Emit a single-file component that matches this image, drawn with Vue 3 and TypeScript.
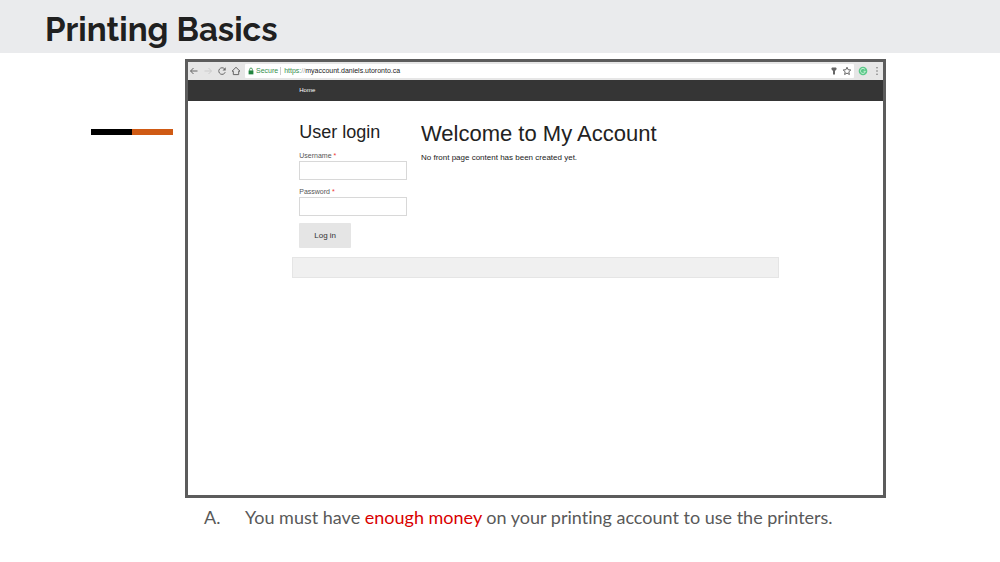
<script setup lang="ts">
import { ref } from 'vue'

const username = ref('')
const password = ref('')
const address = ref('https://myaccount.daniels.utoronto.ca')
</script>

<template>
  <div class="slide">
    <header class="title-bar">
      <h1>Printing Basics</h1>
    </header>
    <main class="body">
      <div class="accent"><span class="dark"></span><span class="orange"></span></div>
      <section class="content">
        <div class="browser">
          <div class="toolbar">
            <div class="nav-buttons">
              <button type="button" aria-label="Back">
                <svg viewBox="0 0 10 10"><path d="M8.5 5H1.7M4.5 2L1.5 5l3 3" /></svg>
              </button>
              <button type="button" aria-label="Forward" class="faded">
                <svg viewBox="0 0 10 10"><path d="M1.5 5h6.8M5.5 2l3 3-3 3" /></svg>
              </button>
              <button type="button" aria-label="Reload">
                <svg viewBox="0 0 10 10"><path d="M8.2 6.2A3.3 3.3 0 1 1 7.5 2.8" /><path class="solid" d="M8.7 1.2v3.2H5.5z" /></svg>
              </button>
              <button type="button" aria-label="Home page">
                <svg viewBox="0 0 10 10"><path d="M1 5.2L5 1.3l4 3.9H7.7v3.4H2.3V5.2z" /></svg>
              </button>
            </div>
            <div class="address">
              <svg class="lock" viewBox="0 0 10 10"><path d="M3.3 4.5V3a1.7 1.7 0 0 1 3.4 0v1.5" /><path class="solid" d="M2 4.3h6v4.9H2z" /></svg>
              <span class="secure">Secure</span>
              <span class="divider"></span>
              <a class="url" :href="address"><span class="scheme">https:</span><span class="slashes">//</span>myaccount.daniels.utoronto.ca</a>
              <button type="button" aria-label="Saved passwords" class="key">
                <svg viewBox="0 0 10 10"><path class="solid" d="M3 1.5h4l.8 1.6L6 5v3l-1 .9L4 8V5L2.2 3.1z" /></svg>
              </button>
              <button type="button" aria-label="Bookmark">
                <svg viewBox="0 0 10 10"><path d="M5 1.2l1.1 2.5 2.7.3-2 1.8.6 2.7L5 7.1 2.6 8.5l.6-2.7-2-1.8 2.7-.3z" /></svg>
              </button>
            </div>
            <button type="button" aria-label="Extension" class="extension">
              <svg viewBox="0 0 10 10"><circle cx="5" cy="5" r="4.3" /><path d="M7 3.5A2.5 2.5 0 1 0 7.4 5.3H5.6" /></svg>
            </button>
            <button type="button" aria-label="Menu" class="menu">
              <svg viewBox="0 0 10 10"><circle cx="5" cy="1.8" r=".8" /><circle cx="5" cy="5" r=".8" /><circle cx="5" cy="8.2" r=".8" /></svg>
            </button>
          </div>
          <nav class="site-nav"><div class="site"><a href="#home">Home</a></div></nav>
          <div class="site page">
            <form class="login" @submit.prevent>
              <h2>User login</h2>
              <label for="username">Username <em>*</em></label>
              <input id="username" v-model="username" type="text" />
              <label for="password">Password <em>*</em></label>
              <input id="password" v-model="password" type="password" />
              <button type="submit">Log in</button>
            </form>
            <article>
              <h2>Welcome to My Account</h2>
              <p>No front page content has been created yet.</p>
            </article>
          </div>
          <footer class="site site-footer"></footer>
        </div>
        <ol class="notes">
          <li><span class="marker">A.</span><span>You must have <strong>enough money</strong> on your printing account to use the printers.</span></li>
        </ol>
      </section>
    </main>
  </div>
</template>

<style>
body {
  margin: 0;
  background: #fff;
}
</style>

<style scoped>
* {
  box-sizing: border-box;
}
.slide {
  min-height: 100vh;
  font-family: Lato, sans-serif;
}
h1, h2, p, ol {
  margin: 0;
  padding: 0;
  list-style: none;
}
button {
  padding: 0;
  border: 0;
  background: none;
  color: inherit;
  font: inherit;
}
.title-bar {
  height: 53px;
  padding: 8px 45px 0;
  background: #eaebed;
}
h1 {
  color: #202020;
  font: 700 33px/44px Raleway, Lato, sans-serif;
}
.body {
  display: grid;
  grid-template-columns: 185px 1fr 114px;
  padding-top: 6px;
}
.accent {
  display: flex;
  height: 6px;
  margin: 70px 12px 0 91px;
}
.accent span {
  flex: 1;
}
.dark {
  background: #000;
}
.orange {
  background: #cf5a14;
}
.browser {
  height: calc(100vh - 123px);
  min-height: 300px;
  border: 3px solid #5c5c5c;
  background: #fff;
  font-family: "Liberation Sans", Arial, sans-serif;
}
.toolbar {
  display: flex;
  align-items: center;
  height: 18px;
  background: #e6e6e6;
  color: #666;
}
.toolbar button {
  display: flex;
  flex: none;
}
.toolbar svg {
  width: 10px;
  height: 10px;
  fill: none;
  stroke: currentColor;
  stroke-width: 1;
}
.toolbar .solid {
  fill: currentColor;
  stroke: none;
}
.nav-buttons {
  display: flex;
  gap: 4px;
  padding: 0 4px 0 1px;
}
.toolbar .faded {
  color: #ccc;
}
.address {
  display: flex;
  flex: 1;
  align-items: center;
  height: 14px;
  padding: 0 2px;
  border-radius: 1px;
  background: #fff;
  font-size: 7px;
  line-height: 10px;
}
.toolbar .lock {
  width: 8px;
  height: 8px;
  margin-right: 1px;
  color: #23853f;
}
.secure, .scheme {
  color: #35904e;
}
.divider {
  width: 1px;
  height: 8px;
  margin: 0 3px 0 2px;
  background: #ccc;
}
.url {
  flex: 1;
  color: #222;
  text-decoration: none;
}
.slashes {
  color: #aaa;
}
.address .key {
  margin-right: 3px;
}
.extension {
  margin: 0 4px;
}
.toolbar .extension svg {
  stroke: #c4f0d4;
}
.extension circle {
  fill: #5cc98a;
  stroke: none;
}
.menu {
  margin-right: 1px;
}
.menu circle {
  fill: #777;
  stroke: none;
}
.site {
  width: 70%;
  margin: 0 auto;
}
.site-nav {
  height: 21px;
  background: #353535;
}
.site-nav a {
  display: block;
  padding-left: 7px;
  color: #fff;
  font-size: 6px;
  line-height: 21px;
  text-decoration: none;
}
.page {
  display: flex;
  gap: 14px;
  padding: 19px 7px 9px;
  color: #222;
}
.login {
  display: flex;
  flex: none;
  flex-direction: column;
  width: 22.8%;
}
.login h2 {
  margin-bottom: 7px;
  font-size: 18px;
  font-weight: 400;
  line-height: 24px;
}
label {
  color: #555;
  font-size: 7px;
  line-height: 10px;
}
label em {
  color: #e33;
  font-style: normal;
}
input {
  width: 100%;
  height: 19px;
  margin-bottom: 7px;
  padding: 0 4px;
  border: 1px solid #d8d8d8;
  background: #fff;
  font-size: 8px;
}
.login button {
  align-self: flex-start;
  height: 25px;
  padding: 0 15px;
  border-radius: 1px;
  background: #e5e5e5;
  color: #333;
  font-size: 8px;
}
article h2 {
  font-size: 22px;
  font-weight: 400;
  line-height: 28px;
}
article p {
  margin-top: 5px;
  font-size: 8px;
  line-height: 10px;
}
.site-footer {
  height: 21px;
  border: 1px solid #e5e5e5;
  background: #f0f0f0;
}
.notes li {
  display: flex;
  padding: 7px 0 0 19px;
  color: #595959;
  font-size: 18px;
  font-variant-ligatures: none;
  line-height: 24px;
}
.marker {
  flex: none;
  width: 41px;
}
.notes strong {
  color: #d90000;
  font-weight: 400;
}
</style>
